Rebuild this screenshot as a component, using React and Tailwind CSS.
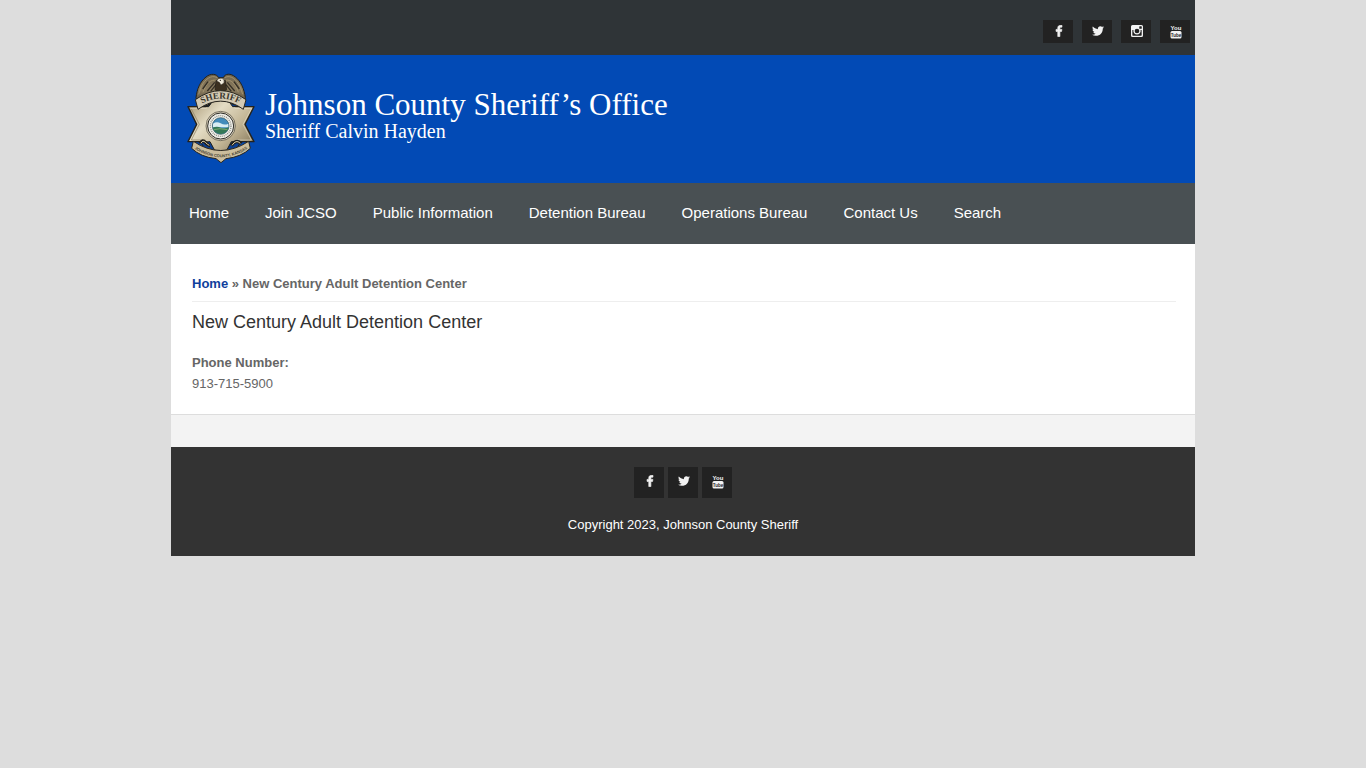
import React from "react";
import { FaTwitter } from "react-icons/fa";

const navItems = [
    "Home",
    "Join JCSO",
    "Public Information",
    "Detention Bureau",
    "Operations Bureau",
    "Contact Us",
    "Search",
];

const FacebookIcon = ({ className }) => (
    <svg viewBox="45 -38 964 1764" className={className} aria-hidden="true">
        <path
            fill="currentColor"
            stroke="currentColor"
            strokeWidth="100"
            d="M959 12v264h-157q-86 0-116 36t-30 108v189h293l-39 296h-254v759h-306v-759h-255v-296h255v-218q0-186 104-288.500t277-102.500q147 0 228 12z"
        />
    </svg>
);

const InstagramIcon = ({ className }) => (
    <svg viewBox="0 0 24 24" className={className} aria-hidden="true">
        <path
            fill="currentColor"
            fillRule="evenodd"
            d="M3 0h18a3 3 0 0 1 3 3v18a3 3 0 0 1-3 3H3a3 3 0 0 1-3-3V3a3 3 0 0 1 3-3ZM17.500 2.700a1 1 0 0 0-1 1v2.800a1 1 0 0 0 1 1h3a1 1 0 0 0 1-1V3.700a1 1 0 0 0-1-1ZM2.700 10.200v10a1.100 1.100 0 0 0 1.100 1.100h16.400a1.100 1.100 0 0 0 1.100-1.100v-10h-2.200a7.300 7.300 0 1 1-14.200 0ZM12 7.300a4.700 4.700 0 1 0 0 9.400 4.700 4.700 0 0 0 0-9.400Z"
        />
    </svg>
);

const YoutubeIcon = ({ className }) => (
    <svg viewBox="0 0 24 28" className={className} aria-hidden="true">
        <text x="12" y="10" textAnchor="middle" fontSize="12" fontWeight="700" fontFamily="Liberation Sans Narrow, Liberation Sans, sans-serif" fill="currentColor">
            You
        </text>
        <rect x="1" y="12" width="22" height="15" rx="3" fill="currentColor" />
        <text x="12" y="23" textAnchor="middle" fontSize="9" fontWeight="700" fontFamily="Liberation Sans Narrow, Liberation Sans, sans-serif" fill="#222222">
            Tube
        </text>
    </svg>
);

const socials = {
    facebook: { label: "Facebook", icon: FacebookIcon, size: "h-3 w-2" },
    twitter: { label: "Twitter", icon: FaTwitter, size: "size-3" },
    instagram: { label: "Instagram", icon: InstagramIcon, size: "size-3" },
    youtube: { label: "YouTube", icon: YoutubeIcon, size: "h-[14px] w-3" },
};

const SocialLink = ({ name, className }) => {
    const { label, icon: Icon, size } = socials[name];
    return (
        <a
            href="#"
            aria-label={label}
            className={`flex w-[30px] justify-center bg-[#222222] pl-[2px] text-[#f2f2f2] ${className}`}
        >
            <Icon className={size} />
        </a>
    );
};

const Badge = () => (
    <svg viewBox="21 24 204 270" className="h-[90px] w-[68px] shrink-0" role="img" aria-label="Sheriff badge">
        <defs>
            <linearGradient id="gold" gradientUnits="userSpaceOnUse" x1="40" y1="100" x2="205" y2="260">
                <stop offset="0" stopColor="#a99a78" />
                <stop offset="0.35" stopColor="#e4dcc4" />
                <stop offset="0.65" stopColor="#c5b898" />
                <stop offset="1" stopColor="#85775a" />
            </linearGradient>
            <linearGradient id="wing" x1="0" y1="0" x2="0" y2="1">
                <stop offset="0" stopColor="#6d624b" />
                <stop offset="0.5" stopColor="#8d7e60" />
                <stop offset="1" stopColor="#4d4637" />
            </linearGradient>
            <path id="top-arc" d="M48 127Q122 75 196 127" />
            <path id="bottom-arc" d="M40 249Q122 304 206 249" />
        </defs>

        {/* star */}
        <path
            d="M122 72L152 125H222L195 178L222 230H152L122 282L92 230H24L50 178L24 125H92Z"
            fill="url(#gold)"
            stroke="#24221c"
            strokeWidth="4"
            strokeLinejoin="round"
        />
        <path d="M96 112H148L166 127V228L148 254H96L78 228V127Z" fill="url(#gold)" />
        <path d="M31 130H80M164 130H215L189 178L214 225H168" fill="none" stroke="#f4eedb" strokeWidth="2" opacity="0.7" />
        <path d="M76 225H34L58 178L34 132" fill="none" stroke="#8a7c5e" strokeWidth="2" />

        {/* eagle */}
        <path
            d="M116 38C110 26 92 24 78 36C60 50 51 72 48 98L54 118L82 100L122 88L162 100L190 118L196 98C193 72 182 48 166 36C152 24 135 25 130 38Z"
            fill="url(#wing)"
            stroke="#25221b"
            strokeWidth="3"
            strokeLinejoin="round"
        />
        <path
            d="M112 38C93 28 74 44 64 64L56 88M110 46C92 42 78 56 69 82M134 38C152 28 170 44 180 64L188 88M136 46C153 42 167 56 175 82"
            fill="none"
            stroke="#a3936f"
            strokeWidth="3"
        />
        <path
            d="M104 52L82 78M108 59L92 79M142 52L164 78M138 59L154 79M84 50L68 72M162 50L178 72"
            stroke="#352f25"
            strokeWidth="4"
        />
        <path d="M108 46Q122 54 136 46L140 74L123 84L105 74Z" fill="#3b3020" stroke="#211d16" strokeWidth="2" />
        <path d="M110 48Q114 38 126 40Q135 44 132 54L123 60L118 52Z" fill="#efeadb" stroke="#2c271e" strokeWidth="1.500" />
        <circle cx="121" cy="46" r="2" fill="#1e1a14" />

        {/* openings and scroll work behind the banners */}
        <path d="M66 124L88 106L98 108L86 125ZM178 124L156 106L146 108L158 125Z" fill="#0b3f92" stroke="#211f19" strokeWidth="3" />
        <path d="M62 232L90 230L104 256L74 250ZM182 232L154 230L140 256L170 250Z" fill="#0b3f92" stroke="#211f19" strokeWidth="3" />
        <path
            d="M62 122Q68 110 76 116T90 110M154 110Q162 118 168 114T182 122M60 236Q66 222 76 232T90 242M154 242Q160 232 168 230T184 236"
            fill="none"
            stroke="#211f19"
            strokeWidth="10"
        />
        <path
            d="M63 121Q70 112 76 117T88 111M156 111Q164 119 169 115T181 121M63 235Q68 224 76 232T88 241M156 241Q162 232 168 230T181 235"
            fill="none"
            stroke="#d8ccab"
            strokeWidth="3"
        />

        {/* banners */}
        <path
            d="M46 104Q122 50 198 104L190 133Q122 84 54 133Z"
            fill="#d3cab4"
            stroke="#29261f"
            strokeWidth="3"
            strokeLinejoin="round"
        />
        <text fontFamily="Liberation Serif, serif" fontSize="27" fontWeight="700" fill="#39352c">
            <textPath href="#top-arc" startOffset="50%" textAnchor="middle">SHERIFF</textPath>
        </text>
        <path
            d="M40 229Q122 284 206 229L211 250Q184 276 138 281L123 293L108 281Q62 276 35 250Z"
            fill="#cbbd9c"
            stroke="#29261f"
            strokeWidth="3"
            strokeLinejoin="round"
        />
        <text fontFamily="Liberation Sans, sans-serif" fontSize="12" fontWeight="700" fill="#423c30">
            <textPath href="#bottom-arc" startOffset="50%" textAnchor="middle">JOHNSON COUNTY, KANSAS</textPath>
        </text>

        {/* county seal */}
        <circle cx="122" cy="183" r="44" fill="#d8cfba" stroke="#4b4739" strokeWidth="2" />
        <circle cx="122" cy="183" r="39" fill="#f0efe9" stroke="#2c2c26" strokeWidth="3" />
        <circle cx="122" cy="183" r="31" fill="none" stroke="#8b8f87" strokeWidth="4" strokeDasharray="3 3" />
        <circle cx="122" cy="183" r="25" fill="#428bbb" stroke="#31515b" strokeWidth="2" />
        <path d="M99 176Q110 168 122 175T145 176V187H99Z" fill="#d8ecf2" />
        <path d="M98 188Q111 183 122 188T146 187Q145 198 132 205Q119 210 107 202Q99 195 98 188Z" fill="#347957" />
        <path d="M102 194Q117 188 142 194" fill="none" stroke="#9bbc75" strokeWidth="2" />
    </svg>
);

const App = () => {
    return (
        <div className="min-h-screen bg-[#dddddd] font-['Liberation_Sans',Arial,sans-serif] text-[13px] leading-[21px] text-[#666666]">
            <div className="mx-auto max-w-5xl bg-white">
                <div className="flex justify-end gap-[9px] bg-[#2f3437] pt-5 pr-[5px] pb-3">
                    {Object.keys(socials).map((name) => (
                        <SocialLink key={name} name={name} className="h-[23px] pt-[5px]" />
                    ))}
                </div>

                <header className="flex items-start bg-[#024ab5] px-4 pt-[18px] pb-5">
                    <Badge />
                    <div className="pt-4 pl-[10px] font-['Liberation_Serif','Times_New_Roman',serif] text-white">
                        <p className="text-[31px] leading-[32px]">Johnson County Sheriff’s Office</p>
                        <p className="text-[20px] leading-5">Sheriff Calvin Hayden</p>
                    </div>
                </header>

                <nav className="flex flex-wrap bg-[#495053]">
                    {navItems.map((item) => (
                        <a key={item} href="#" className="px-[18px] pt-[19px] pb-[21px] text-[15px] leading-[21px] text-white">
                            {item}
                        </a>
                    ))}
                </nav>

                <main className="pt-[29px] pr-[19px] pb-5 pl-[21px]">
                    <div className="border-b border-[#eeeeee] pb-[7px] font-bold">
                        <a href="#" className="text-[#0f3f9c]">Home</a> » New Century Adult Detention Center
                    </div>
                    <h1 className="pt-2 text-[18px] leading-6 text-[#333333]">New Century Adult Detention Center</h1>
                    <p className="pt-[18px] font-bold">Phone Number:</p>
                    <p>913-715-5900</p>
                </main>

                <div className="h-[33px] border-t border-[#dddddd] bg-[#f3f3f3]" />

                <footer className="bg-[#333333] pt-5 pb-[21px] text-center text-white">
                    <div className="flex justify-center gap-1">
                        <SocialLink name="facebook" className="h-[31px] pt-2" />
                        <SocialLink name="twitter" className="h-[31px] pt-2" />
                        <SocialLink name="youtube" className="h-[31px] pt-2" />
                    </div>
                    <p className="pt-4">Copyright 2023, Johnson County Sheriff</p>
                </footer>
            </div>
        </div>
    );
};

export default App;
